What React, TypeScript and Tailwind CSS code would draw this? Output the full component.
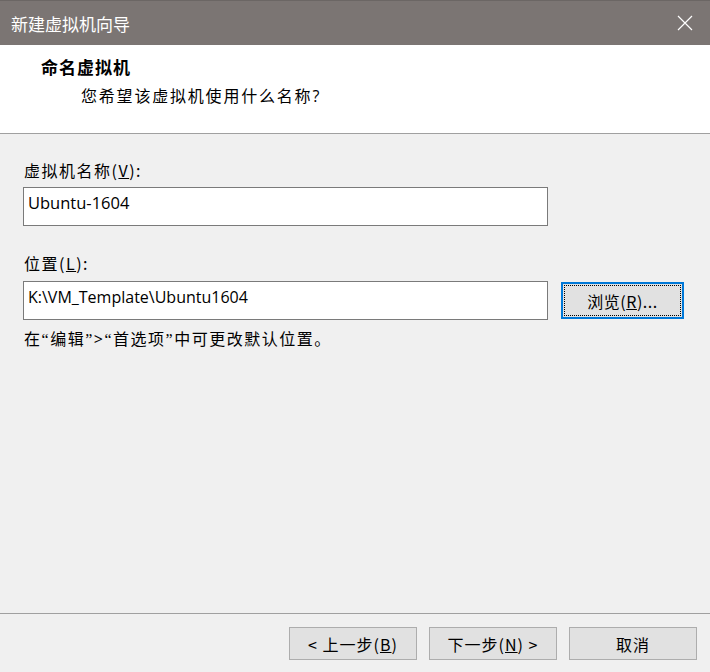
import React from "react";

const cjk = { fontFamily: '"Noto Sans CJK SC", "Noto Sans", sans-serif' };
const latin = { fontFamily: '"Open Sans", "Noto Sans", "Noto Sans CJK SC", sans-serif' };

function Button({ children, className = "" }: { children: React.ReactNode; className?: string }) {
  return (
    <button
      className={`h-[33px] w-[128px] border border-[#adadad] bg-[#e1e1e1] text-[16px] tracking-[1px] text-black flex items-center justify-center ${className}`}
    >
      {children}
    </button>
  );
}

const Q = ({ c }: { c: string }) => (
  <span style={{ fontFamily: '"Liberation Serif", serif' }}>{c}</span>
);

export default function App() {
  return (
    <div className="w-[710px] h-[672px] flex flex-col bg-[#f0f0f0] overflow-hidden" style={cjk}>
      {/* title bar */}
      <div className="h-[45px] shrink-0 bg-[#7b7573] border-t border-[#6b6664] flex items-center justify-between pl-[11px] pr-[17px]">
        <span className="text-white text-[17px] leading-none">新建虚拟机向导</span>
        <svg width="16" height="16" viewBox="0 0 16 16" className="text-white">
          <path d="M1 1 L15 15 M15 1 L1 15" stroke="currentColor" strokeWidth="1.2" fill="none" />
        </svg>
      </div>

      {/* header */}
      <div className="h-[89px] shrink-0 bg-white border-b border-[#a0a0a0] pl-[41px] pt-[10px]">
        <div className="text-[17px] font-bold leading-[24px] tracking-[1px] text-black">命名虚拟机</div>
        <div className="text-[16px] leading-[24px] tracking-[1.8px] text-black pl-[40px] mt-[4px]">
          您希望该虚拟机使用什么名称<span style={latin}>?</span>
        </div>
      </div>

      {/* body */}
      <div className="flex-1 pl-[23px] pt-[25px] text-black">
        <div className="text-[16px] leading-[22px] tracking-[1.5px] pl-[1px]">
          虚拟机名称(<span className="underline">V</span>):
        </div>
        <div
          className="mt-[6px] h-[39px] w-[525px] bg-white border border-[#7a7a7a] px-[4px] pt-[3px] text-[16.5px] leading-[24px]"
          style={latin}
        >
          Ubuntu-1604
        </div>

        <div className="mt-[26px] text-[16px] leading-[22px] tracking-[1.5px] pl-[1px]">
          位置(<span className="underline">L</span>):
        </div>
        <div className="mt-[7px] flex items-center">
          <div
            className="h-[39px] w-[525px] bg-white border border-[#7a7a7a] px-[4px] pt-[3px] text-[16px] leading-[24px]"
            style={latin}
          >
            K:\VM_Template\Ubuntu1604
          </div>
          <div className="ml-[13px] h-[37px] w-[123px] border-2 border-[#0078d7] bg-[#e1e1e1] p-[1px]">
            <div className="h-full w-full border border-dotted border-black flex items-center justify-center text-[16px] tracking-[0.5px]">
              浏览(<span className="underline">R</span>)...
            </div>
          </div>
        </div>

        <div className="mt-[7px] text-[16px] leading-[22px] tracking-[1.5px] pl-[1px]">
          在<Q c="“" />编辑<Q c="”" />
          <span style={latin}>&gt;</span>
          <Q c="“" />首选项<Q c="”" />中可更改默认位置。
        </div>
      </div>

      {/* footer */}
      <div className="h-[59px] shrink-0 border-t border-[#a0a0a0] flex justify-end gap-[12px] pr-[13px] pt-[13px]">
        <Button>
          &lt; 上一步(<span className="underline">B</span>)
        </Button>
        <Button>
          下一步(<span className="underline">N</span>) &gt;
        </Button>
        <Button>取消</Button>
      </div>
    </div>
  );
}
